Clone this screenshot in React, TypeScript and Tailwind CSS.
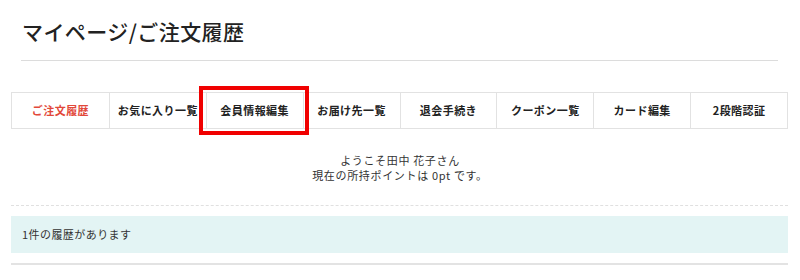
import React from "react";

const tabs = [
  "ご注文履歴",
  "お気に入り一覧",
  "会員情報編集",
  "お届け先一覧",
  "退会手続き",
  "クーポン一覧",
  "カード編集",
  "2段階認証",
];

export default function App() {
  return (
    <div
      className="w-[800px] h-[280px] bg-white text-[#222] overflow-hidden"
      style={{ fontFamily: '"Noto Sans CJK JP", "Noto Sans", sans-serif' }}
    >
      <div className="pl-[21px] pr-[22px] pt-[16px]">
        <h1 className="text-[21px] leading-[30px] font-medium pl-[1px] pb-[14px] border-b border-[#dcdcdc] tracking-[0.02em]">
          マイページ/ご注文履歴
        </h1>
      </div>

      <div className="pl-[11px] pr-[12px] mt-[31px]">
        <div className="grid grid-cols-8 border border-[#e2e2e2] h-[37px]">
          {tabs.map((t, i) => (
            <div
              key={t}
              className={`relative flex items-center justify-center text-[11px] font-bold tracking-[0.04em] ${
                i > 0 ? "border-l border-[#e2e2e2]" : ""
              } ${i === 0 ? "text-[#e2483a]" : "text-[#222]"}`}
            >
              {t}
              {i === 2 && (
                <div className="absolute left-[-8px] right-[-6px] top-[-7px] bottom-[-7px] border-[4px] border-[#f00000]" />
              )}
            </div>
          ))}
        </div>
      </div>

      <div className="mt-[24px] text-center text-[11px] leading-[15px] tracking-[0.06em] text-[#333]">
        <p>ようこそ田中 花子さん</p>
        <p>現在の所持ポイントは 0pt です。</p>
      </div>

      <div className="pl-[11px] pr-[12px]">
        <div className="mt-[22px] border-t border-dashed border-[#e0e0e0]" />
        <div className="mt-[10px] h-[37px] bg-[#e3f4f4] flex items-center pl-[11px] text-[11px] tracking-[0.04em] text-[#333]">
          1件の履歴があります
        </div>
        <div className="mt-[10px] h-[2px] bg-[#e3e3e3]" />
      </div>
    </div>
  );
}
